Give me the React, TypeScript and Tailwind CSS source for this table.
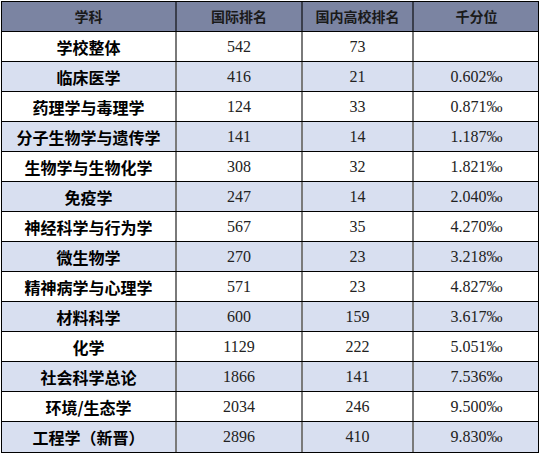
import React from 'react';

const rows: [string, string, string, string][] = [
  ['学校整体', '542', '73', ''],
  ['临床医学', '416', '21', '0.602‰'],
  ['药理学与毒理学', '124', '33', '0.871‰'],
  ['分子生物学与遗传学', '141', '14', '1.187‰'],
  ['生物学与生物化学', '308', '32', '1.821‰'],
  ['免疫学', '247', '14', '2.040‰'],
  ['神经科学与行为学', '567', '35', '4.270‰'],
  ['微生物学', '270', '23', '3.218‰'],
  ['精神病学与心理学', '571', '23', '4.827‰'],
  ['材料科学', '600', '159', '3.617‰'],
  ['化学', '1129', '222', '5.051‰'],
  ['社会科学总论', '1866', '141', '7.536‰'],
  ['环境/生态学', '2034', '246', '9.500‰'],
  ['工程学（新晋）', '2896', '410', '9.830‰'],
];

const headers = ['学科', '国际排名', '国内高校排名', '千分位'];

export default function App() {
  return (
    <div className="w-[540px] h-[454px] bg-white pt-px pl-px">
      <div className="w-[538px] border border-black">
        <div className="grid grid-cols-[175px_126px_111px_125px] h-[30px] bg-[#7b84a2] border-b border-black">
          {headers.map((h, i) => (
            <div
              key={h}
              className={`flex items-center justify-center font-['Noto_Sans_CJK_SC',sans-serif] text-[14px] font-bold text-[#1a1a1a] ${i < 3 ? 'border-r-2 border-[#3a3e4c]' : ''}`}
            >
              {h}
            </div>
          ))}
        </div>
        {rows.map((r, idx) => (
          <div
            key={r[0]}
            className={`grid grid-cols-[175px_126px_111px_125px] h-[30px] ${idx % 2 === 1 ? 'bg-[#d8dff0]' : 'bg-white'} ${idx < rows.length - 1 ? 'border-b border-black' : ''}`}
          >
            <div className="flex items-center justify-center font-['Noto_Sans_CJK_SC',sans-serif] text-[16px] font-bold text-black border-r-2 border-[#7a7a7a]">
              {r[0]}
            </div>
            <div className="flex items-center justify-center font-['Liberation_Serif','Noto_Sans_CJK_SC',serif] text-[16px] text-[#222] border-r-2 border-[#7a7a7a]">
              {r[1]}
            </div>
            <div className="flex items-center justify-center font-['Liberation_Serif','Noto_Sans_CJK_SC',serif] text-[16px] text-[#222] border-r-2 border-[#7a7a7a]">
              {r[2]}
            </div>
            <div className="flex items-center justify-center font-['Liberation_Serif','Noto_Sans_CJK_SC',serif] text-[16px] text-[#222]">
              {r[3]}
            </div>
          </div>
        ))}
      </div>
    </div>
  );
}
